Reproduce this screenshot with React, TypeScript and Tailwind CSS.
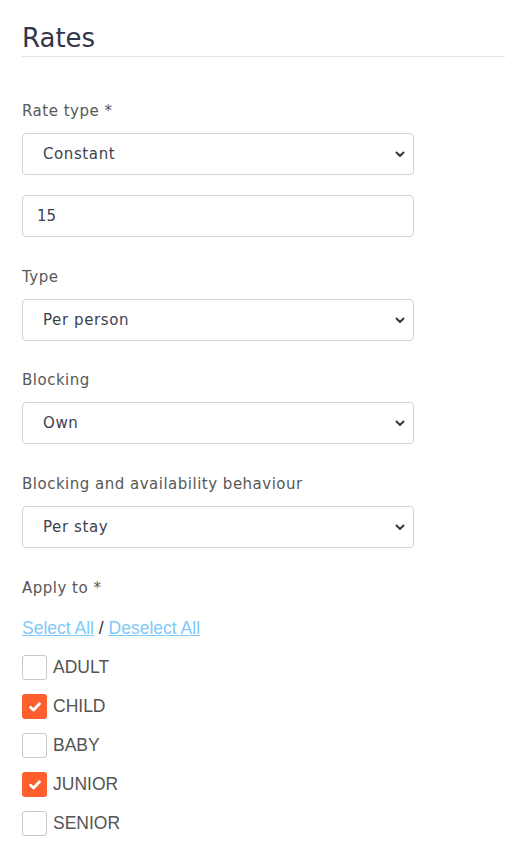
import { useState } from "react"

const font = { fontFamily: '"DejaVu Sans", "Noto Sans", sans-serif' }
const arial = { fontFamily: '"Liberation Sans", Arial, sans-serif' }

function Chevron() {
  return (
    <svg
      className="pointer-events-none absolute right-[8px] top-1/2 -translate-y-1/2"
      width="12"
      height="12"
      viewBox="0 0 12 12"
      fill="none"
    >
      <path d="M2.5 4.5 6 8l3.5-3.5" stroke="#343a40" strokeWidth="2" strokeLinecap="round" strokeLinejoin="round" />
    </svg>
  )
}

function SelectField({ value, options }: { value: string; options: string[] }) {
  return (
    <div className="relative w-[392px]">
      <select
        defaultValue={value}
        className="h-[42px] w-full appearance-none rounded-[4px] border border-[#ced4da] bg-white pl-[20px] pr-8 text-[15px] tracking-[0.6px] text-[#3d4150] outline-none"
      >
        {options.map((o) => (
          <option key={o}>{o}</option>
        ))}
      </select>
      <Chevron />
    </div>
  )
}

function Label({ children }: { children: React.ReactNode }) {
  return (
    <label className="mb-[10px] block h-[24px] text-[15px] leading-[24px] tracking-[0.5px] text-[#585858]">
      {children}
    </label>
  )
}

const people = [
  { name: "ADULT", checked: false },
  { name: "CHILD", checked: true },
  { name: "BABY", checked: false },
  { name: "JUNIOR", checked: true },
  { name: "SENIOR", checked: false },
]

export default function App() {
  const [checks, setChecks] = useState(people)

  return (
    <div className="min-h-[853px] bg-white pl-[22px]" style={font}>
      <h2 className="border-b border-[#e4e4e4] pt-[22px] pb-[2px] text-[26px] leading-[32px] font-normal text-[#31364a]">
        Rates
      </h2>

      <div className="pt-[42px]">
        <Label>Rate type *</Label>
        <SelectField value="Constant" options={["Constant", "Variable"]} />
        <input
          defaultValue="15"
          className="mt-[20px] h-[42px] w-[392px] rounded-[4px] border border-[#ced4da] px-[14px] text-[15px] text-[#3d4150] outline-none"
        />
      </div>

      <div className="pt-[28px]">
        <Label>Type</Label>
        <SelectField value="Per person" options={["Per person", "Per unit"]} />
      </div>

      <div className="pt-[27px]">
        <Label>Blocking</Label>
        <SelectField value="Own" options={["Own", "Shared"]} />
      </div>

      <div className="pt-[28px]">
        <Label>Blocking and availability behaviour</Label>
        <SelectField value="Per stay" options={["Per stay", "Per night"]} />
      </div>

      <div className="pt-[28px]">
        <Label>Apply to *</Label>
        <div className="mt-[18px] h-[20px] text-[17.5px] leading-[20px] text-[#333]" style={arial}>
          <a href="#" className="text-[#7fc9f7] underline">
            Select All
          </a>{" "}
          /{" "}
          <a href="#" className="text-[#7fc9f7] underline">
            Deselect All
          </a>
        </div>

        <div className="mt-[17px] flex flex-col gap-[14px]" style={arial}>
          {checks.map((p, i) => (
            <label key={p.name} className="flex h-[25px] items-center gap-[6px] text-[17.5px] text-[#555]">
              <button
                type="button"
                onClick={() => setChecks(checks.map((c, j) => (j === i ? { ...c, checked: !c.checked } : c)))}
                className={
                  p.checked
                    ? "flex h-[25px] w-[25px] items-center justify-center rounded-[3px] bg-[#ff5f2e]"
                    : "h-[25px] w-[25px] rounded-[3px] border border-[#c8c8c8] bg-white"
                }
              >
                {p.checked && (
                  <svg width="16" height="16" viewBox="0 0 16 16">
                    <path d="M3.5 8.2 6.6 11 12.5 4.8" fill="none" stroke="white" strokeWidth="2.8" strokeLinecap="round" strokeLinejoin="round" />
                  </svg>
                )}
              </button>
              {p.name}
            </label>
          ))}
        </div>
      </div>
    </div>
  )
}
